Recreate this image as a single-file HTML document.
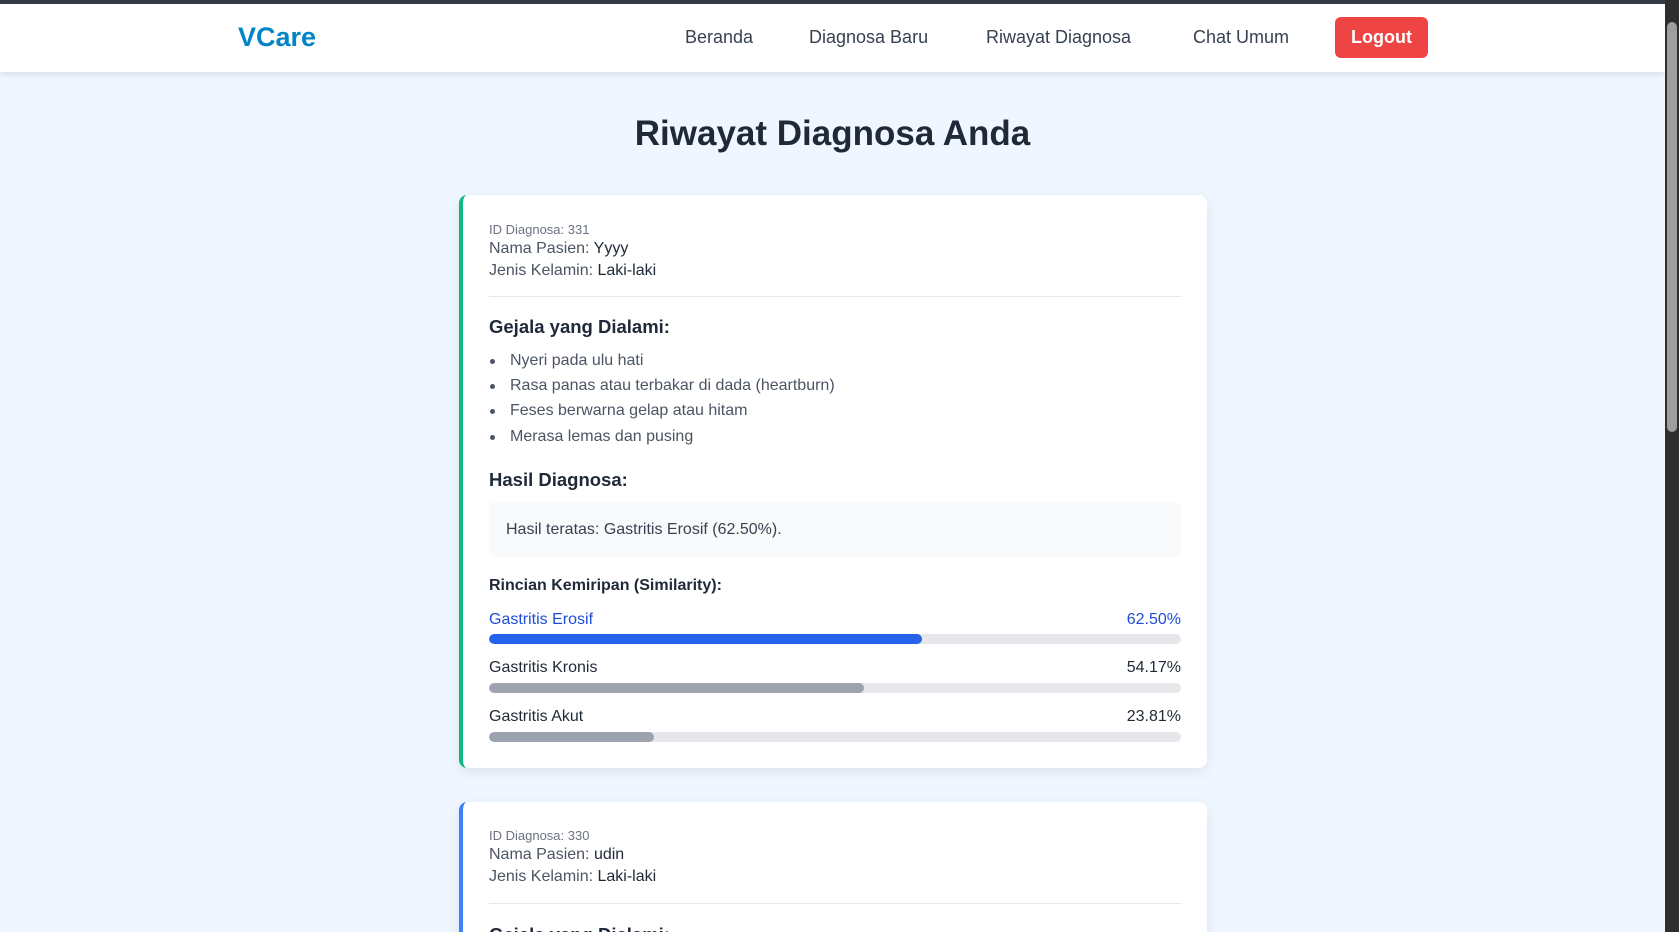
<!DOCTYPE html>
<html><head><meta charset="utf-8"><style>
*{margin:0;padding:0;box-sizing:border-box}
html{width:1679px;height:932px;overflow:hidden}
body{width:1679px;height:932px;overflow:hidden;background:#eff6ff;font-family:"Liberation Sans",sans-serif;position:relative;color:#1f2937}
.a{position:absolute;white-space:nowrap;line-height:1}
.top{position:absolute;left:0;top:0;width:1679px;height:4px;background:#333b47}
.nav{position:absolute;left:0;top:4px;width:1665px;height:68px;background:#fff;box-shadow:0 2px 6px rgba(0,0,0,.1)}
.sb{position:absolute;right:0;top:0;width:14px;height:932px;background:#2e2e2e}
.thumb{position:absolute;right:2px;top:22px;width:10px;height:410px;background:#9e9e9e;border-radius:5px}
.card{position:absolute;left:459px;width:748px;background:#fff;border-radius:8px;box-shadow:0 4px 12px rgba(0,0,0,.08)}
.navi{font-size:18px;color:#374151;top:28px}
.small{font-size:13px;color:#6b7280}
.t{font-size:16px;color:#4b5563}
.t b{color:#1f2937;font-weight:normal}
.h{font-size:18.5px;font-weight:bold;color:#1f2937}
.li{font-size:16px;color:#4b5563}
.dot{position:absolute;width:5px;height:5px;border-radius:50%;background:#4b5563}
.bar{position:absolute;left:489px;width:692px;height:10px;border-radius:5px;background:#e5e7eb;overflow:hidden}
.bar i{display:block;height:100%;border-radius:5px}
.lab{font-size:16px;color:#1f2937}
</style></head><body>
<div class="top"></div>
<div class="nav"></div>
<div class="a" style="left:238px;top:24px;font-size:27px;font-weight:bold;color:#0284c7">VCare</div>
<div class="a navi" style="left:685px">Beranda</div>
<div class="a navi" style="left:809px">Diagnosa Baru</div>
<div class="a navi" style="left:986px">Riwayat Diagnosa</div>
<div class="a navi" style="left:1193px">Chat Umum</div>
<div class="a" style="left:1335px;top:17px;width:93px;height:41px;background:#ef4444;border-radius:6px;color:#fff;font-weight:bold;font-size:18px;text-align:center;line-height:41px">Logout</div>
<div class="a" style="left:0;width:1665px;text-align:center;top:116px;font-size:35px;font-weight:bold;color:#1f2937">Riwayat Diagnosa Anda</div>

<div class="card" style="top:195px;height:573px;border-left:4px solid #10b981"></div>
<div class="a small" style="left:489px;top:223px">ID Diagnosa: 331</div>
<div class="a t" style="left:489px;top:241px">Nama Pasien: <b>Yyyy</b></div>
<div class="a t" style="left:489px;top:263px">Jenis Kelamin: <b>Laki-laki</b></div>
<div class="a" style="left:489px;top:296px;width:692px;height:1px;background:#e5e7eb"></div>
<div class="a h" style="left:489px;top:318px">Gejala yang Dialami:</div>
<div class="dot" style="left:490px;top:359px"></div><div class="a li" style="left:510px;top:353px">Nyeri pada ulu hati</div>
<div class="dot" style="left:490px;top:384px"></div><div class="a li" style="left:510px;top:378px">Rasa panas atau terbakar di dada (heartburn)</div>
<div class="dot" style="left:490px;top:409px"></div><div class="a li" style="left:510px;top:403px">Feses berwarna gelap atau hitam</div>
<div class="dot" style="left:490px;top:435px"></div><div class="a li" style="left:510px;top:429px">Merasa lemas dan pusing</div>
<div class="a h" style="left:489px;top:471px">Hasil Diagnosa:</div>
<div class="a" style="left:489px;top:502px;width:692px;height:55px;background:#f9fafb;border-radius:6px"></div>
<div class="a li" style="left:506px;top:522px;color:#374151">Hasil teratas: Gastritis Erosif (62.50%).</div>
<div class="a" style="left:489px;top:578px;font-size:16px;font-weight:bold;color:#1f2937">Rincian Kemiripan (Similarity):</div>
<div class="a lab" style="left:489px;top:612px;color:#1d4ed8">Gastritis Erosif</div>
<div class="a lab" style="right:498px;top:612px;color:#1d4ed8">62.50%</div>
<div class="bar" style="top:634px"><i style="width:62.5%;background:#2563eb"></i></div>
<div class="a lab" style="left:489px;top:660px">Gastritis Kronis</div>
<div class="a lab" style="right:498px;top:660px">54.17%</div>
<div class="bar" style="top:683px"><i style="width:54.17%;background:#9ca3af"></i></div>
<div class="a lab" style="left:489px;top:709px">Gastritis Akut</div>
<div class="a lab" style="right:498px;top:709px">23.81%</div>
<div class="bar" style="top:732px"><i style="width:23.81%;background:#9ca3af"></i></div>

<div class="card" style="top:802px;height:140px;border-left:4px solid #3b82f6"></div>
<div class="a small" style="left:489px;top:829px">ID Diagnosa: 330</div>
<div class="a t" style="left:489px;top:847px">Nama Pasien: <b>udin</b></div>
<div class="a t" style="left:489px;top:869px">Jenis Kelamin: <b>Laki-laki</b></div>
<div class="a" style="left:489px;top:903px;width:692px;height:1px;background:#e5e7eb"></div>
<div class="a h" style="left:489px;top:926px">Gejala yang Dialami:</div>

<div class="sb"><div class="thumb"></div></div>
</body></html>
